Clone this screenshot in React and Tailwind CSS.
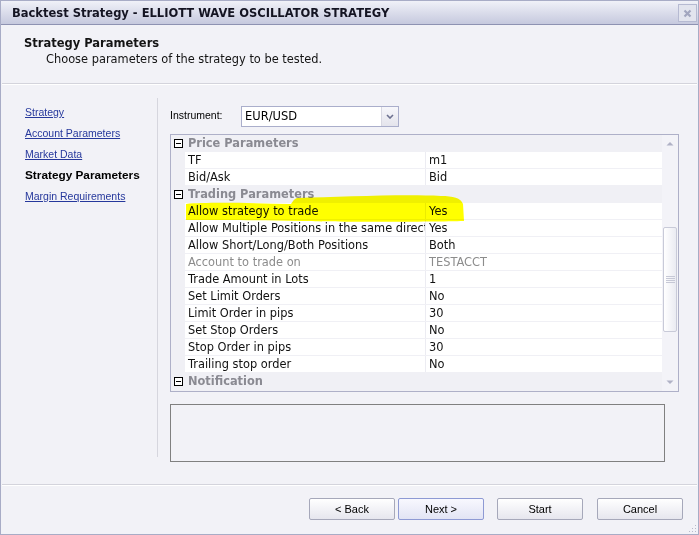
import React from 'react';

const rows = [
  { cat: 'Price Parameters' },
  { name: 'TF', value: 'm1' },
  { name: 'Bid/Ask', value: 'Bid' },
  { cat: 'Trading Parameters' },
  { name: 'Allow strategy to trade', value: 'Yes' },
  { name: 'Allow Multiple Positions in the same direct', value: 'Yes' },
  { name: 'Allow Short/Long/Both Positions', value: 'Both' },
  { name: 'Account to trade on', value: 'TESTACCT', dim: true },
  { name: 'Trade Amount in Lots', value: '1' },
  { name: 'Set Limit Orders', value: 'No' },
  { name: 'Limit Order in pips', value: '30' },
  { name: 'Set Stop Orders', value: 'No' },
  { name: 'Stop Order in pips', value: '30' },
  { name: 'Trailing stop order', value: 'No' },
  { cat: 'Notification' },
];

const navItems = ['Strategy', 'Account Parameters', 'Market Data', 'Strategy Parameters', 'Margin Requirements'];

const MinusBox = () => (
  <div className="w-[9px] h-[9px] border border-black bg-white flex items-center justify-center">
    <div className="w-[5px] h-px bg-black" />
  </div>
);

const GridRow = ({ row }) => {
  if (row.cat) {
    return (
      <div className="flex items-center h-[17px] bg-[#f0f0f5] shrink-0">
        <div className="w-[14px] flex justify-center pl-[1px]">
          <MinusBox />
        </div>
        <span className="pl-[3px] font-bold text-[#8a8a92]">{row.cat}</span>
      </div>
    );
  }
  const color = row.dim ? 'text-[#8c8c8c]' : 'text-[#111]';
  return (
    <div className="flex h-[17px] bg-[#f0f0f5] shrink-0">
      <div className="w-[14px]" />
      <div className="flex flex-1 h-[16px] bg-white">
        <div className={`w-[241px] pl-[3px] border-r border-[#ececf2] overflow-hidden whitespace-nowrap leading-[16px] ${color}`}>
          {row.name}
        </div>
        <div className={`flex-1 pl-[3px] leading-[16px] ${color}`}>{row.value}</div>
      </div>
    </div>
  );
};

const Button = ({ label, primary }) => (
  <button
    className={`w-[86px] h-[22px] rounded-[2px] border text-[11px] text-black font-['Liberation_Sans',sans-serif] ${
      primary
        ? 'border-[#8e9ad4] bg-linear-to-b from-[#f8f8fe] to-[#e2e4f4]'
        : 'border-[#a6a8ba] bg-linear-to-b from-[#ffffff] to-[#e6e6ee]'
    }`}
  >
    {label}
  </button>
);

export default function App() {
  return (
    <div className="relative w-[699px] h-[535px] bg-[#f2f2f7] border border-[#a8acc6] flex flex-col overflow-hidden font-['DejaVu_Sans',sans-serif] text-[11.4px]">
      {/* title bar */}
      <div className="h-[24px] shrink-0 flex items-start justify-between border-b border-[#8e92b2] bg-linear-to-b from-[#f0f1f8] to-[#c6c9de]">
        <div className="pl-[11px] pt-[5px] font-bold text-[11.5px] text-[#141422] leading-[15px]">
          Backtest Strategy - ELLIOTT WAVE OSCILLATOR STRATEGY
        </div>
        <div className="mt-[3px] mr-[1px] w-[19px] h-[18px] border border-[#b6bad2] bg-[#e2e4ee] flex items-center justify-center">
          <svg width="9" height="9" viewBox="0 0 9 9">
            <path d="M1.5 1.5 L7.5 7.5 M7.5 1.5 L1.5 7.5" stroke="#a2a6bf" strokeWidth="2.2" />
          </svg>
        </div>
      </div>

      {/* header */}
      <div className="h-[58px] shrink-0 pl-[23px] pt-[11px] text-[#141414]">
        <div className="font-bold text-[11.5px] leading-[14px]">Strategy Parameters</div>
        <div className="pl-[22px] pt-[2px] leading-[14px]">Choose parameters of the strategy to be tested.</div>
      </div>
      <div className="shrink-0 mx-[1px] border-t border-[#d4d4dc] border-b border-b-white" />

      {/* middle */}
      <div className="h-[399px] shrink-0 flex">
        <div className="w-[156px] pl-[24px] pt-[17px] font-['Liberation_Sans',sans-serif] text-[10.5px]">
          {navItems.map((item) =>
            item === 'Strategy Parameters' ? (
              <div key={item} className="leading-[21px] font-bold text-[11.8px] text-black">{item}</div>
            ) : (
              <div key={item} className="leading-[21px]">
                <span className="underline text-[#26389c]">{item}</span>
              </div>
            )
          )}
        </div>
        <div className="w-px mt-[13px] h-[359px] bg-[#d6d6de]" />
        <div className="flex-1 pl-[12px] pt-[20px]">
          <div className="flex items-center h-[22px]">
            <div className="w-[71px] font-['Liberation_Sans',sans-serif] text-[10.5px] text-black">Instrument:</div>
            <div className="w-[158px] h-[21px] border border-[#aaaecb] bg-white flex">
              <div className="flex-1 pl-[3px] leading-[19px] text-[11.5px] text-black">EUR/USD</div>
              <div className="w-[17px] border-l border-[#d8d8e2] bg-linear-to-b from-[#f7f7fb] to-[#e4e4ec] flex items-center justify-center">
                <svg width="8" height="5" viewBox="0 0 8 5">
                  <path d="M1 1 L4 4 L7 1" stroke="#6d7190" strokeWidth="1.6" fill="none" />
                </svg>
              </div>
            </div>
          </div>

          {/* property grid */}
          <div className="mt-[7px] w-[509px] h-[258px] border border-[#aeb0c8] flex bg-[#f0f0f5]">
            <div className="flex-1 flex flex-col overflow-hidden">
              {rows.map((row, i) => (
                <GridRow key={i} row={row} />
              ))}
            </div>
            <div className="w-[16px] bg-[#f3f3f8] flex flex-col items-center">
              <div className="h-[17px] flex items-center justify-center">
                <svg width="8" height="5" viewBox="0 0 8 5">
                  <path d="M0.5 4.5 L4 1 L7.5 4.5 Z" fill="#b0b2c6" />
                </svg>
              </div>
              <div className="h-[75px]" />
              <div className="w-[14px] h-[105px] rounded-[2px] border border-[#c8cad8] bg-linear-to-r from-white to-[#eaebf2] flex flex-col items-center justify-center gap-[1px]">
                <div className="w-[9px] h-px bg-[#c6c8d6]" />
                <div className="w-[9px] h-px bg-[#c6c8d6]" />
                <div className="w-[9px] h-px bg-[#c6c8d6]" />
                <div className="w-[9px] h-px bg-[#c6c8d6]" />
              </div>
              <div className="flex-1" />
              <div className="h-[17px] flex items-center justify-center">
                <svg width="8" height="5" viewBox="0 0 8 5">
                  <path d="M0.5 0.5 L4 4 L7.5 0.5 Z" fill="#b0b2c6" />
                </svg>
              </div>
            </div>
          </div>

          {/* description */}
          <div className="mt-[12px] w-[495px] h-[58px] border border-[#808080]" />
        </div>
      </div>

      <div className="shrink-0 mx-[1px] border-t border-[#d4d4dc] border-b border-b-white" />

      {/* buttons */}
      <div className="flex-1 flex justify-end items-start pt-[12px] pr-[15px]">
        <Button label="< Back" />
        <div className="ml-[3px]">
          <Button label="Next >" primary />
        </div>
        <div className="ml-[13px]">
          <Button label="Start" />
        </div>
        <div className="ml-[14px]">
          <Button label="Cancel" />
        </div>
      </div>

      {/* resize grip */}
      <svg className="absolute right-[1px] bottom-[1px]" width="8" height="8" viewBox="0 0 8 8">
        <rect x="6" y="0" width="1" height="1" fill="#b8bacb" />
        <rect x="3" y="3" width="1" height="1" fill="#b8bacb" />
        <rect x="6" y="3" width="1" height="1" fill="#b8bacb" />
        <rect x="0" y="6" width="1" height="1" fill="#b8bacb" />
        <rect x="3" y="6" width="1" height="1" fill="#b8bacb" />
        <rect x="6" y="6" width="1" height="1" fill="#b8bacb" />
      </svg>

      {/* marker highlight drawn over the grid */}
      <svg className="absolute left-0 top-0 pointer-events-none mix-blend-multiply" width="699" height="535" viewBox="0 0 699 535">
        <path
          d="M185 203 C205 201 250 202 290 203 C292 200 293 198 296 197 C340 196 400 193 440 195 C452 195 460 197 462 203 L463 220 C430 221 330 221 300 220 C260 219 230 219 185 219 Z"
          fill="#ffff00"
        />
      </svg>
    </div>
  );
}
